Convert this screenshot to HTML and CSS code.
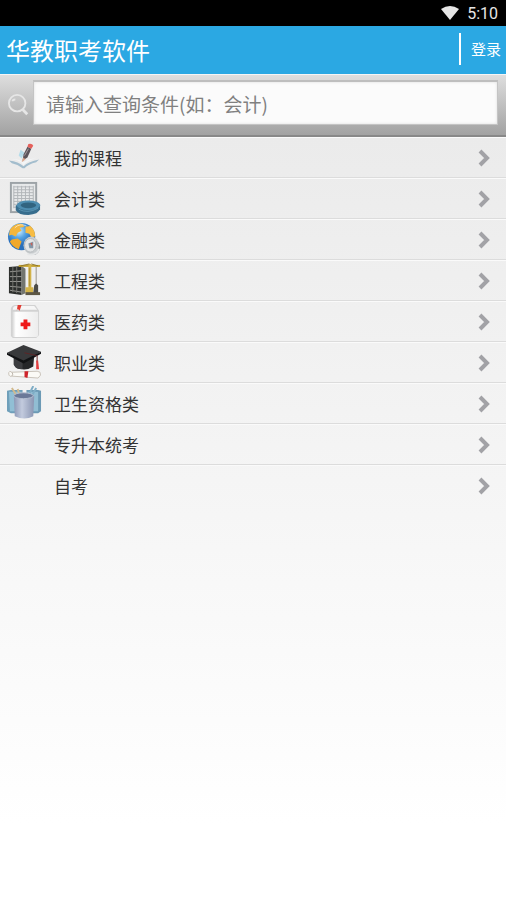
FILE: index.html
```html
<!DOCTYPE html>
<html lang="zh-CN">
<head>
    <meta charset="UTF-8">
    <meta name="viewport" content="width=device-width, initial-scale=1.0">
    <title>华教职考软件</title>
    <link rel="stylesheet" href="styles.css">
</head>
<body>
    <div class="status-bar">
        <svg class="wifi" viewBox="0 0 18 14"><path d="M0 3Q9-3 18 3L9 14Z"/></svg>
        <span>5:10</span>
    </div>

    <header class="header">
        <h1>华教职考软件</h1>
        <a class="login" href="#login">登录</a>
    </header>

    <form class="search">
        <label for="keyword" aria-label="查询">
            <svg class="search-icon" viewBox="0 0 24 24">
                <circle cx="10" cy="10" r="9"/>
                <path d="M16 17L21 22" stroke-width="3"/>
                <path d="M5 8Q5 6 8 6"/>
            </svg>
        </label>
        <input id="keyword" type="text" placeholder="请输入查询条件(如：会计)">
    </form>

    <main>
        <ul class="list">
            <li>
                <a href="#course">
                    <!-- 书和铅笔 -->
                    <svg class="icon" viewBox="0 0 36 36">
                        <path d="M2 21Q12 22 17 27Q22 22 33 20L30 23Q22 25 18 29H16Q11 25 5 24Z" fill="#a3bdcd"/>
                        <path d="M5 20Q13 20 17 26Q22 20 30 19Q22 19 17 23Q12 19 5 20Z" fill="#f3f6f8"/>
                        <path d="M14 10L18 13L15 19L12 16Z" fill="#b5dcea"/>
                        <path d="M16 21L17 15L21 7L25 9L21 18Z" fill="#5a545b"/>
                        <path d="M18 16L22 9" stroke="#a99fa3" stroke-width="1"/>
                        <path d="M21 7L22 4Q26 3 27 6L25 9Z" fill="#e5605b"/>
                        <path d="M15 23L17 18L19 20Z" fill="#dca58b"/>
                    </svg>
                    <span>我的课程</span>
                    <svg class="arrow" viewBox="0 0 12 18"><path d="M2 2L9 9L2 16"/></svg>
                </a>
            </li>
            <li>
                <a href="#accounting">
                    <!-- 报表 -->
                    <svg class="icon" viewBox="0 0 36 36">
                        <rect x="3" y="1" width="28" height="32" fill="#9da3a7"/>
                        <rect x="5" y="3" width="24" height="28" fill="#e7e9ea"/>
                        <path d="M7 6H27M7 9H27M7 12H27M7 15H27M7 18H27M7 21H27M7 24H27M7 27H27M7 5V28M11 5V28M15 5V28M19 5V28M23 5V28M27 5V28" stroke="#b2b6b9" stroke-width="1"/>
                        <path d="M9 25V30Q12 35 22 35Q32 34 34 29V24Z" fill="#376d8d"/>
                        <ellipse cx="22" cy="25" rx="12" ry="5" fill="#4e8db0"/>
                        <ellipse cx="22" cy="25" rx="8" ry="3" fill="#326480"/>
                        <path d="M12 29Q21 34 32 28" stroke="#5c95b3" fill="none"/>
                    </svg>
                    <span>会计类</span>
                    <svg class="arrow" viewBox="0 0 12 18"><path d="M2 2L9 9L2 16"/></svg>
                </a>
            </li>
            <li>
                <a href="#finance">
                    <!-- 地球和硬币 -->
                    <svg class="icon" viewBox="0 0 36 36">
                        <defs>
                            <radialGradient id="globe" cx="40%" cy="30%">
                                <stop offset="0" stop-color="#d3efff"/>
                                <stop offset="0.5" stop-color="#56a4e4"/>
                                <stop offset="1" stop-color="#2a70bb"/>
                            </radialGradient>
                        </defs>
                        <circle cx="15" cy="15" r="14" fill="url(#globe)"/>
                        <path d="M3 8Q8 1 16 2L18 5L13 6L15 9L11 11L9 15L5 13L2 14Z" fill="#f4b63c"/>
                        <path d="M19 5L24 4Q29 8 29 15L25 16L23 12L19 11Z" fill="#f8bc42"/>
                        <path d="M5 18L11 17L15 20L12 28Q5 25 3 20Z" fill="#f1a92c"/>
                        <path d="M8 6Q13 1 20 4" stroke="#fff" opacity=".6" fill="none"/>
                        <ellipse cx="27" cy="26" rx="7" ry="8" fill="#999fa3"/>
                        <ellipse cx="25" cy="24" rx="8" ry="9" fill="#c9cdcf"/>
                        <ellipse cx="24" cy="24" rx="6" ry="7" fill="#e3e5e6" stroke="#b4b9bc"/>
                        <path d="M22 22L27 20V27H23Z" fill="#8297a8"/>
                        <path d="M24 22L26 21V25Z" fill="#d15d50"/>
                        <path d="M21 33Q30 35 33 28" stroke="#e5e7e8" fill="none" stroke-width="2"/>
                    </svg>
                    <span>金融类</span>
                    <svg class="arrow" viewBox="0 0 12 18"><path d="M2 2L9 9L2 16"/></svg>
                </a>
            </li>
            <li>
                <a href="#engineering">
                    <!-- 楼房和塔吊 -->
                    <svg class="icon" viewBox="0 0 36 36">
                        <path d="M2 4L15 3V33L2 31Z" fill="#2c2e2c"/>
                        <path d="M15 3L19 6V31L15 33Z" fill="#73756f"/>
                        <path d="M3 9L15 8M3 14H15M3 19H15M3 24L15 25M3 28L15 30" stroke="#9a9a95" stroke-width="1"/>
                        <path d="M6 4V30M10 4V31" stroke="#777773" stroke-width="1"/>
                        <path d="M12 2H34V4H12Z" fill="#c4a22e"/>
                        <path d="M22 1H25V25H27V31H19V25H22Z" fill="#d3b349"/>
                        <path d="M23 5V24" stroke="#b1933a" fill="none"/>
                        <path d="M25 1L32 3M23 1L14 3" stroke="#8e772d"/>
                        <path d="M30 4V23" stroke="#98948a"/>
                        <path d="M28 23L30 21L32 23V31H27Z" fill="#4b4b48"/>
                        <path d="M19 30H34V33H19Z" fill="#5d5745"/>
                    </svg>
                    <span>工程类</span>
                    <svg class="arrow" viewBox="0 0 12 18"><path d="M2 2L9 9L2 16"/></svg>
                </a>
            </li>
            <li>
                <a href="#medicine">
                    <!-- 病历本 -->
                    <svg class="icon" viewBox="0 0 36 36">
                        <defs>
                            <linearGradient id="book">
                                <stop offset="0" stop-color="#cfcfcf"/>
                                <stop offset="0.15" stop-color="#fff"/>
                                <stop offset="1" stop-color="#ededed"/>
                            </linearGradient>
                        </defs>
                        <path d="M4 8Q3 2 8 1H29L33 7V32L30 35H6L4 33Z" fill="#d2d2d2"/>
                        <path d="M6 6Q6 2 9 2H28L31 6Z" fill="#f6f6f6"/>
                        <path d="M5 8H32V32Q32 34 30 34H7Q5 34 5 32Z" fill="url(#book)"/>
                        <path d="M11 1H15L13 7L11 5L10 7Z" fill="#e13b32"/>
                        <path d="M17 16H21V19H24V23H21V26H17V23H14V19H17Z" fill="#ee1919"/>
                    </svg>
                    <span>医药类</span>
                    <svg class="arrow" viewBox="0 0 12 18"><path d="M2 2L9 9L2 16"/></svg>
                </a>
            </li>
            <li>
                <a href="#career">
                    <!-- 学士帽 -->
                    <svg class="icon" viewBox="0 0 36 36">
                        <path d="M3 27Q1 28 2 31Q3 33 5 32L32 34Q36 31 34 28L31 27L5 28Z" fill="#fbfaf6" stroke="#c8c2b9"/>
                        <path d="M5 28Q7 30 5 32" stroke="#bcb4aa" fill="none"/>
                        <path d="M18 27H22L21 34L18 33Z" fill="#ce242b"/>
                        <path d="M7 13L28 11L27 22Q21 26 16 25Q9 25 7 20Z" fill="#252628"/>
                        <path d="M16 17V25Q9 25 7 20V13Z" fill="#3c3d40"/>
                        <path d="M0 8L17 0L35 7L17 18Z" fill="#38393b"/>
                        <path d="M0 8L17 16L35 7V9L17 19L0 10Z" fill="#111214"/>
                        <path d="M18 8L31 11V18" stroke="#5d2425" fill="none"/>
                        <path d="M30 16H32L33 25H30Z" fill="#e23e40"/>
                    </svg>
                    <span>职业类</span>
                    <svg class="arrow" viewBox="0 0 12 18"><path d="M2 2L9 9L2 16"/></svg>
                </a>
            </li>
            <li>
                <a href="#health">
                    <!-- 笔筒 -->
                    <svg class="icon" viewBox="0 0 36 36">
                        <defs>
                            <linearGradient id="cup">
                                <stop offset="0" stop-color="#8c98b6"/>
                                <stop offset="0.4" stop-color="#c3cbde"/>
                                <stop offset="1" stop-color="#8a95b2"/>
                            </linearGradient>
                        </defs>
                        <path d="M0 5L4 4H16V28H4L0 26Z" fill="#6f9fba"/>
                        <path d="M2 6H15V26H3Z" fill="#91bfd5"/>
                        <path d="M20 4H32L35 5V26L32 28H20Z" fill="#6c9ab5"/>
                        <path d="M21 6H32V26H21Z" fill="#91bdd3"/>
                        <path d="M10 10L5 2M13 10L11 3" stroke="#d1b98d" stroke-width="2"/>
                        <path d="M22 10L27 0M25 11L30 2" stroke="#7fadc6" stroke-width="2"/>
                        <path d="M7 10H28L27 31Q18 36 8 31Z" fill="url(#cup)"/>
                        <ellipse cx="17" cy="10" rx="10" ry="3" fill="#6b7998" stroke="#b4becf"/>
                    </svg>
                    <span>卫生资格类</span>
                    <svg class="arrow" viewBox="0 0 12 18"><path d="M2 2L9 9L2 16"/></svg>
                </a>
            </li>
            <li>
                <a href="#upgrade">
                    <div class="icon"></div>
                    <span>专升本统考</span>
                    <svg class="arrow" viewBox="0 0 12 18"><path d="M2 2L9 9L2 16"/></svg>
                </a>
            </li>
            <li>
                <a href="#self-study">
                    <div class="icon"></div>
                    <span>自考</span>
                    <svg class="arrow" viewBox="0 0 12 18"><path d="M2 2L9 9L2 16"/></svg>
                </a>
            </li>
        </ul>
    </main>
</body>
</html>
```
FILE: styles.css
```css
* {
    box-sizing: border-box;
}
body {
    margin: 0;
    min-height: 100vh;
    display: flex;
    flex-direction: column;
    font-family: "Noto Sans CJK SC", sans-serif;
    color: #333;
}
a {
    color: inherit;
    text-decoration: none;
}

.status-bar {
    height: 26px;
    padding: 0 8px;
    display: flex;
    align-items: center;
    justify-content: flex-end;
    gap: 8px;
    background-color: #000;
    color: #e6e6e6;
    font-family: Roboto, sans-serif;
    font-size: 16px;
}
.wifi {
    width: 18px;
    height: 14px;
    fill: #e6e6e6;
}

.header {
    height: 48px;
    padding: 0 5px 2px 6px;
    display: flex;
    align-items: center;
    justify-content: space-between;
    background-color: #2ba8e3;
    color: #fff;
}
.header h1 {
    margin: 0;
    font-size: 24px;
    font-weight: 400;
}
.login {
    height: 32px;
    padding-left: 10px;
    border-left: 2px solid #fff;
    font-size: 15px;
    line-height: 32px;
}

.search {
    height: 63px;
    padding: 5px 8px 10px;
    display: flex;
    gap: 3px;
    border-top: 1px solid #f5f5f5;
    border-bottom: 2px solid #888;
    background: linear-gradient(#dedede, #a2a2a2);
}
.search label {
    display: flex;
    align-items: center;
}
.search-icon {
    width: 22px;
    height: 22px;
    margin-top: 4px;
    fill: none;
    stroke: #e6e6e6;
    stroke-width: 2;
}
.search input {
    flex: 1;
    min-width: 0;
    padding: 0 12px;
    border: 1px solid #c4c4c4;
    border-top: 2px solid #bebebe;
    background-color: #fbfbfb;
    box-shadow: inset 0 0 3px #ddd;
    font-family: inherit;
    font-size: 19px;
    color: #333;
}
.search input::placeholder {
    color: #808080;
}

main {
    flex: 1;
    background: linear-gradient(#ebebeb, #fff 90%);
}
.list {
    margin: 0;
    padding: 0;
    list-style: none;
}
.list li {
    border-top: 1px solid #fafafa;
    border-bottom: 1px solid #dcdcdc;
}
.list li:last-child {
    border-bottom: none;
}
.list a {
    height: 39px;
    padding: 0 16px 0 7px;
    display: flex;
    align-items: center;
    font-size: 17px;
}
.list span {
    flex: 1;
}
.icon {
    width: 35px;
    height: 35px;
    margin-right: 12px;
}
.arrow {
    width: 12px;
    height: 18px;
    fill: none;
    stroke: #a2a2a6;
    stroke-width: 4;
}
```
